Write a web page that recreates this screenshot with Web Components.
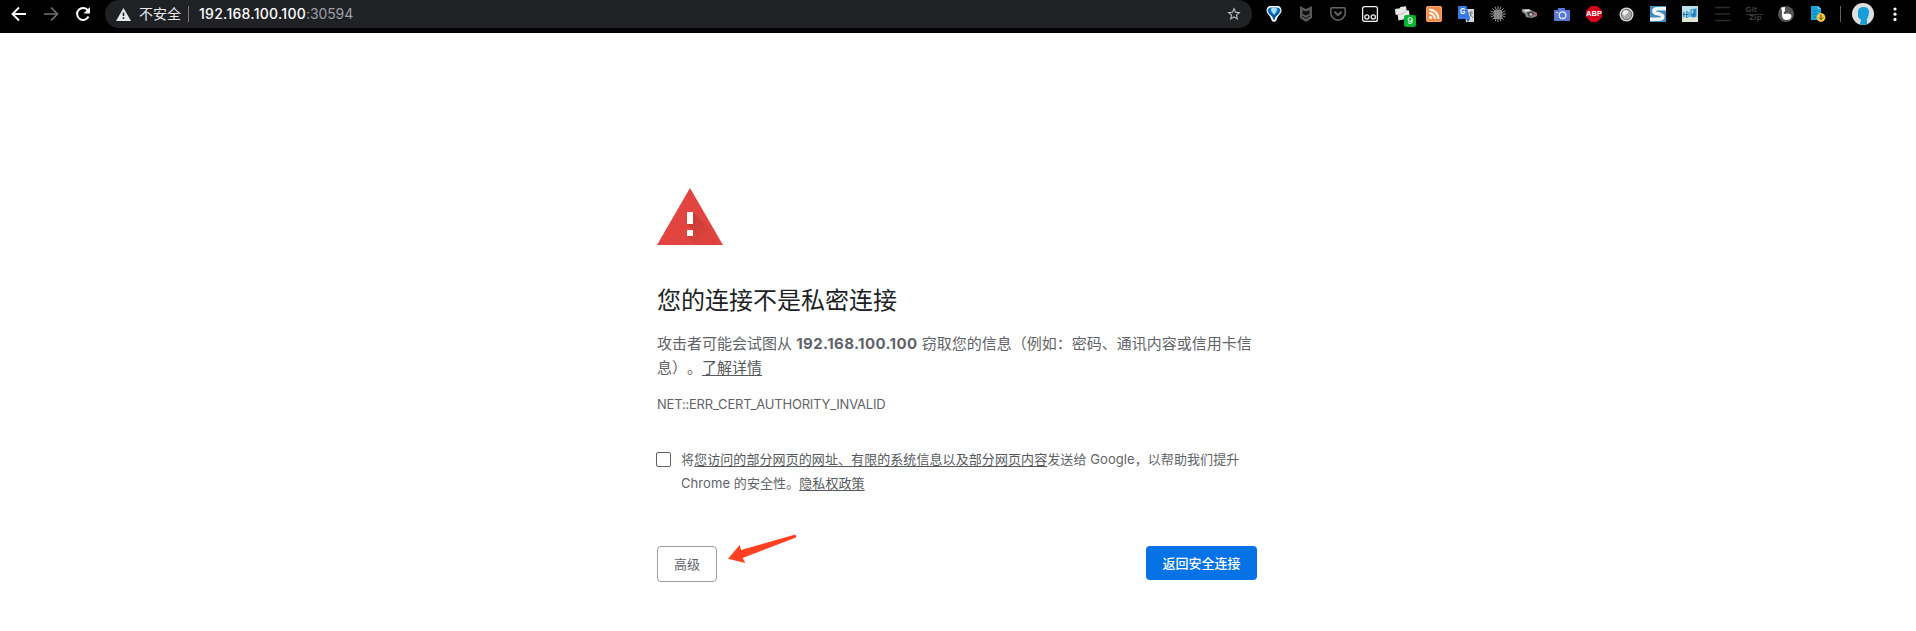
<!DOCTYPE html>
<html lang="zh-CN">
<head>
<meta charset="utf-8">
<title>隐私设置错误</title>
<style>
html,body{margin:0;height:100%;background:#fff;overflow:hidden}
body{font-family:Inter,"Noto Sans CJK SC",sans-serif;text-spacing-trim:space-all}
</style>
</head>
<body>
<browser-window>
  <browser-toolbar slot="toolbar"></browser-toolbar>
  <ssl-warning></ssl-warning>
</browser-window>
<script>
const define = (name, html) => customElements.define(name, class extends HTMLElement {
  constructor() { super(); this.attachShadow({mode: 'open'}).innerHTML = html; }
});

define('browser-window', `<style>
:host{display:flex;flex-direction:column;height:631px}
main{flex:1;display:flex;justify-content:center}
</style><slot name="toolbar"></slot><main><slot></slot></main>`);

define('toolbar-button', `<style>
:host{display:flex;width:32px;height:28px;align-items:center;justify-content:center;flex:none}
</style><slot></slot>`);

define('omni-box', `<style>
:host{display:flex;align-items:center;box-sizing:border-box;width:1147px;height:28px;border-radius:14px;background:#202124;padding:0 10px 0 11px;font-size:14px;color:#e8eaed;white-space:nowrap}
.warn{width:15px;height:13px;margin-top:0}
.label{margin-left:8px;width:43px;font-size:14px;line-height:20px}
.sep{width:1px;height:16px;background:#74777b;margin:0 10px 0 6px}
.url{color:#9aa0a6;letter-spacing:-.12px;line-height:20px}
.url b{font-weight:500;color:#fff;letter-spacing:.28px}
.star{margin-left:auto}
</style>
<svg class="warn" viewBox="0 0 15 13"><path fill="#e8eaed" d="M7.5 0 15 13H0z"/><path fill="#202124" d="M6.7 4.5h1.6v3.6H6.7zM6.7 9.3h1.6v1.7H6.7z"/></svg>
<span class="label">不安全</span><span class="sep"></span>
<span class="url"><b>192.168.100.100</b>:30594</span>
<svg class="star" width="16" height="16" viewBox="0 0 24 24" fill="#bdc1c6"><path d="M22 9.24l-7.19-.62L12 2 9.19 8.63 2 9.24l5.46 4.73L5.82 21 12 17.27 18.18 21l-1.63-7.03zM12 15.4l-3.76 2.27 1-4.28-3.32-2.88 4.38-.38L12 6.1l1.71 4.04 4.38.38-3.32 2.88 1 4.28z"/></svg>`);

define('extension-strip', `<style>
:host{display:flex;height:28px}
svg{display:block;overflow:visible}
.tiles{position:relative}
.badge{position:absolute;left:10px;top:9px;width:12px;height:12px;border-radius:2px;background:#00b32c;color:#fff;font:500 9px/12px Inter,sans-serif;text-align:center}
.abp{width:16px;height:16px;background:#d3001b;clip-path:polygon(30% 0,70% 0,100% 30%,100% 70%,70% 100%,30% 100%,0 70%,0 30%);color:#fff;font:bold 7.500px/16px "Liberation Sans",sans-serif;text-align:center}
.zip{font:bold 7px/7px "DejaVu Sans",sans-serif;color:#3b3b3b;width:17px}
.zip span{display:block}.zip span+span{text-align:right;border-top:1px solid #333;padding-right:1px}
.g{position:absolute;left:2px;top:2px;font:bold 7px/8px Inter,sans-serif;color:#fff}
.rel{position:relative}
</style>
<toolbar-button><svg width="16" height="16" viewBox="0 0 16 16"><path fill="#fff" d="M3.500 0h9Q15.500 1 15.500 4.500q0 2.500-3.500 6l-2 4.500-2 1-2-1-2-4.500Q.5 7 .5 4.500.500 1 3.500 0z"/><path fill="#1670b8" d="M4 1.500h8q2.500 1 2.500 3.300Q14 7.500 10 10.500L8 14.500 6 10.500Q2 7.500 1.500 4.800 1.500 2.500 4 1.500z"/><path fill="#a5e1fb" d="M5.500 2h5l.5 2.500L8 9 5 4.500z"/><path fill="#0753a0" d="m2.500 5 4 5L8 14l1.500-4 4-5L8 9.300z"/></svg></toolbar-button>
<toolbar-button><svg width="12" height="16" viewBox="0 0 12 16"><path fill="#595959" d="M0 0l6 3 6-3v12l-6 4-6-4z"/><path fill="#101010" d="M2.500 4 6 5.600 9.500 4v4L6 9.600 2.500 8z"/><path stroke="#101010" d="m2 10 4 2.500 4-2.500" fill="none"/></svg></toolbar-button>
<toolbar-button><svg width="16" height="14" viewBox="0 0 16 14" fill="none" stroke="#65676a" stroke-width="1.500"><path d="M2 .8h12q1.200 0 1.200 1.200v4q0 3-2.200 5t-5 2.200-5-2.200T.8 6V2Q.8.8 2 .8z"/><path stroke-width="2" d="m4.500 4.800 3.500 3.400 3.500-3.400"/></svg></toolbar-button>
<toolbar-button><svg width="16" height="16" viewBox="0 0 16 16" fill="none" stroke="#f2f2f2" stroke-width="1.300"><rect x=".6" y=".6" width="14.800" height="14.800" rx="2"/><circle cx="4.900" cy="11" r="2.100"/><circle cx="11.300" cy="11" r="2.100"/></svg></toolbar-button>
<toolbar-button><div class="tiles"><svg width="16" height="16" viewBox="0 0 16 16"><path fill="#e8e8e8" d="m1 3 5-.8.3-1.200L12 .200l.6 4 2.400.3.500 4.500-4 .8V13l-7 1.500L3.700 9 1.500 8.600z"/><path stroke="#bdbdbd" d="m4 8.500 5-.7 3-3.300" fill="none"/></svg><span class="badge">9</span></div></toolbar-button>
<toolbar-button><svg width="16" height="16" viewBox="0 0 16 16"><rect width="16" height="16" rx="2" fill="#f28a49"/><rect x=".5" y=".5" width="15" height="15" rx="2" fill="none" stroke="#f6a66e"/><circle cx="4.500" cy="11.500" r="1.600" fill="#fff"/><path d="M3 7a6 6 0 0 1 6 6M3 3.500A9.500 9.500 0 0 1 12.500 13" fill="none" stroke="#fff" stroke-width="2"/></svg></toolbar-button>
<toolbar-button><div class="rel"><svg width="16" height="16" viewBox="0 0 16 16"><path fill="#d7d9dc" d="M6 3h10v13H8z"/><path stroke="#787f88" fill="none" d="M10.500 7H15M13 5v2c0 3-2 4-2 4m1-3 3 4"/><path fill="#3979e4" d="M0 0h8.500l3.500 13H0z"/><path fill="#315fb8" d="m8 13 2 3 2-3z"/></svg><span class="g">G</span></div></toolbar-button>
<toolbar-button><svg width="16" height="16" viewBox="0 0 16 16"><path stroke="#929292" stroke-width="1" d="M8 0v16M0 8h16M2.300 2.300l11.400 11.400M13.700 2.300 2.300 13.700M5 .6l6 14.800M11 .6 5 15.400M.6 5l14.800 6M.6 11 15.400 5"/><path fill="#898989" d="M4 4h8v9H4z"/><path stroke="#707070" d="M6.500 4v9M9.500 4v9" stroke-width=".6"/></svg></toolbar-button>
<toolbar-button><svg width="16" height="12" viewBox="0 0 16 12"><path fill="#8f9290" d="M0 1.500 7 1l8 4v3l-5 2-6-1-1-3-3-2z"/><path fill="#44484a" d="m5 4 5-1 3 3-4 3-3-1z"/><path fill="#d8d8d8" d="m0 1.500 7 0 2 1.500-5 1z"/><path fill="#cb5a49" d="m13 5 2 .5v2.500l-2 .5z"/><circle cx="9" cy="6.500" r="1.400" fill="#bbb"/></svg></toolbar-button>
<toolbar-button><svg width="16" height="13" viewBox="0 0 16 13"><path fill="#5978d2" d="M0 2h4V0h7v2h5v11H0z"/><circle cx="8.500" cy="7.200" r="3.300" fill="none" stroke="#e3eaff" stroke-width="1.300"/><path fill="#dfe7ff" d="M2 4h2v1H2z"/></svg></toolbar-button>
<toolbar-button><div class="abp">ABP</div></toolbar-button>
<toolbar-button><svg width="15" height="15" viewBox="0 0 15 15"><circle cx="7.500" cy="7.500" r="7" fill="#ddd"/><circle cx="7.500" cy="7.500" r="5.200" fill="#aaa" stroke="#666"/><path fill="#eee" d="M3.500 7a4 4 0 0 1 4-4l2 2-4 4z"/></svg></toolbar-button>
<toolbar-button><svg width="16" height="16" viewBox="0 0 16 16"><path fill="#3c8dbd" d="M0 0h16v16H0z"/><path fill="none" stroke="#f1f6fa" stroke-width="3.600" d="M16 2.700H8Q3.800 2.700 3.800 5q0 2 4.200 2.800 4.700.8 4.700 3 0 2.500-4.700 2.500H0"/></svg></toolbar-button>
<toolbar-button><svg width="16" height="16" viewBox="0 0 16 16"><path fill="#b9dfef" d="M0 0h16v16H0z"/><path fill="#dfe5d1" d="M0 12h16v4H0z"/><path fill="#2b8fc4" d="M1 6h1.500v5H1zM4 5h1.500v7H4zM8.500 3.500l6-1v8l-2.500 1-3.500-1z"/><path stroke="#0758a0" stroke-width=".8" fill="none" d="M7 6v5M12 4v6M1 8.500h5"/><path fill="#9fd8f0" d="m9.500 4.500 2-.5v3l-2 .5z"/></svg></toolbar-button>
<toolbar-button><svg width="15" height="16" viewBox="0 0 15 16"><path stroke="#2b2b2b" stroke-width="1.500" d="M0 1.500h15M0 8h15M0 14.500h15"/></svg></toolbar-button>
<toolbar-button><div class="zip"><span>Git</span><span>Zip</span></div></toolbar-button>
<toolbar-button><svg width="16" height="16" viewBox="0 0 16 16"><circle cx="8" cy="8" r="8" fill="#555"/><path fill="#fff" d="M3 1.500 7 1v4L5.500 6.500 6 8l4.500-.5q3 .5 3 3Q12.500 14 9 14q-4.500 0-5-4.500V5z"/></svg></toolbar-button>
<toolbar-button><svg width="16" height="16" viewBox="0 0 16 16"><path fill="#16a6dc" d="M1 0h7l3 3v11H1z"/><path fill="#84d5f2" d="M8 0v3h3z"/><path stroke="#087caf" d="M3 5h5M3 8h4M3 11h3"/><circle cx="11" cy="11.500" r="4.400" fill="#f8c93b"/><path stroke="#554a20" fill="none" d="M11 8.500v5m-2-2 2 2 2-2"/></svg></toolbar-button>`);

define('browser-toolbar', `<style>
:host{display:flex;flex:none;align-items:flex-start;width:1916px;height:33px;background:#000}
svg{display:block}
.nav{display:flex;padding-left:3px;width:102px;box-sizing:content-box}
.sep{width:1px;height:16px;background:#5f6368;margin:6px 11px 0 6px}
.avatar{margin-top:3px}.more{margin:6px 0 0 19px}
extension-strip{margin-left:6px}
</style>
<div class="nav">
<toolbar-button><svg width="16" height="16" viewBox="0 0 16 16" fill="none" stroke="#fff" stroke-width="1.900"><path d="M15 8H2M8 1.500 1.500 8 8 14.500"/></svg></toolbar-button>
<toolbar-button><svg width="16" height="16" viewBox="0 0 16 16" fill="none" stroke="#737373" stroke-width="1.600"><path d="M1 8h13M8 1.500 14.500 8 8 14.500"/></svg></toolbar-button>
<toolbar-button><svg width="16" height="16" viewBox="0 0 16 16"><path d="M13.500 10.500a6 6 0 1 1-.6-6.200" fill="none" stroke="#fff" stroke-width="2"/><path fill="#fff" d="M15 1v6.500H8.500z"/></svg></toolbar-button>
</div>
<omni-box></omni-box><extension-strip></extension-strip><span class="sep"></span>
<svg class="avatar" width="22" height="22" viewBox="0 0 22 22"><circle cx="11" cy="11" r="11" fill="#dedede"/><path fill="#169fd8" d="M6 9q0-5 5.500-5T17 9q0 4-2 7v5q-4 2-7 0l1-4-3-3z"/></svg>
<svg class="more" width="4" height="16" viewBox="0 0 4 16" fill="#fff"><circle cx="2" cy="3" r="1.600"/><circle cx="2" cy="8.200" r="1.600"/><circle cx="2" cy="13.400" r="1.600"/></svg>`);

define('warning-icon', `<style>:host{display:block;height:58px}svg{display:block}</style>
<svg width="66" height="58" viewBox="0 0 66 58"><defs><linearGradient id="s" gradientUnits="userSpaceOnUse" x1="36" y1="32" x2="52" y2="50"><stop stop-color="#cb3d38"/><stop offset="1" stop-color="#dd433e"/></linearGradient></defs><path fill="#e24440" d="M33 1 66 58H0z"/><path fill="url(#s)" d="M36 25 52.500 41.500 62 58H39L30 49l6-6-6-6h6z"/><path fill="#fff" d="M30 25h6v12h-6zM30 43h6v6h-6z"/></svg>`);

define('action-button', `<style>
:host{display:flex;align-items:center;justify-content:center;box-sizing:border-box;width:60px;height:36px;border:1px solid #9aa0a6;border-radius:4px;color:#5f6368;font-size:13px;line-height:20px;white-space:nowrap}
:host([primary]){width:111px;height:34px;border:0;background:#0573e6;color:#fff;font-weight:500}
</style><slot></slot>`);

define('opt-in', `<style>
:host{display:flex;font-size:13px;line-height:24px;letter-spacing:.08px;white-space:nowrap}
i{box-sizing:border-box;width:15px;height:15px;border:1px solid #5f6368;border-radius:2px;margin:5px 10px 0 -1px;flex:none}
</style><i></i><div><slot></slot></div>`);

define('ssl-warning', `<style>
:host{display:block;position:relative;width:600px;padding-top:154px;margin-left:-2px;color:#5f6368;font-size:15px;line-height:24px}
h1{margin:38px 0 13px;font-size:24px;line-height:36px;font-weight:400;color:#202124}
p{margin:0;white-space:nowrap}
b{font-weight:700;letter-spacing:.4px}
u{text-underline-offset:2px;text-decoration-thickness:1px;color:#55585c}
.code{font-size:13px;letter-spacing:-.21px;margin:12px 0 31px}
.actions{display:flex;justify-content:space-between;margin-top:51px}
.arrow{position:absolute;left:71px;top:501px;overflow:visible}
</style>
<warning-icon></warning-icon>
<h1>您的连接不是私密连接</h1>
<p>攻击者可能会试图从 <b>192.168.100.100</b> 窃取您的信息（例如：密码、通讯内容或信用卡信<br>息）。<u>了解详情</u></p>
<p class="code">NET::ERR_CERT_AUTHORITY_INVALID</p>
<opt-in>将<u>您访问的部分网页的网址、有限的系统信息以及部分网页内容</u>发送给 Google，以帮助我们提升<br>Chrome 的安全性。<u>隐私权政策</u></opt-in>
<div class="actions"><action-button>高级</action-button><action-button primary>返回安全连接</action-button></div>
<svg class="arrow" width="68" height="30" viewBox="0 0 68 30"><path fill="#ff4122" d="M0 24.700 11.700 11l1.300 5L66.500.700Q68 .500 68 2v1.500L14.700 24l2.600 5z"/></svg>`);
</script>
</body>
</html>
